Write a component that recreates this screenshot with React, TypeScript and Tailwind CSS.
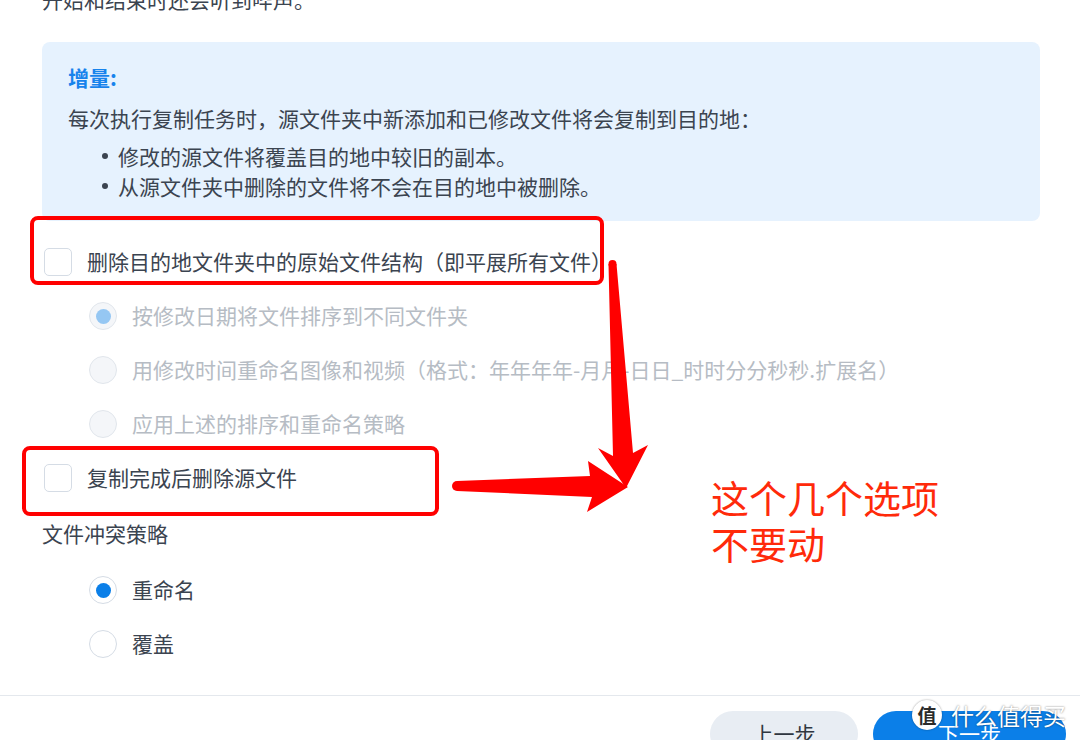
import React from "react";

const font = "font-['Noto_Sans_CJK_SC','Noto_Sans',sans-serif]";

const Checkbox = ({ label }: { label: string }) => (
  <div className="flex h-[54px] items-center gap-[15px] pl-[2px]">
    <span className="h-[28px] w-[28px] rounded-[5px] border-[1.5px] border-[#d5dce5] bg-white" />
    <span className="text-[21px] text-[#3b4450]">{label}</span>
  </div>
);

const Radio = ({
  label,
  checked,
  disabled,
}: {
  label: string;
  checked?: boolean;
  disabled?: boolean;
}) => (
  <div className="flex h-[54px] items-center gap-[15px] pl-[47px]">
    <span
      className={
        "flex h-[28px] w-[28px] items-center justify-center rounded-full border-[1.5px] " +
        (disabled ? "border-[#e1e6ec] bg-[#f4f6f9]" : "border-[#d5dce5] bg-white")
      }
    >
      {checked && (
        <span
          className={
            "h-[15px] w-[15px] rounded-full " +
            (disabled ? "bg-[#95c7f3]" : "bg-[#0b7fe8]")
          }
        />
      )}
    </span>
    <span className={"text-[21px] " + (disabled ? "text-[#b6bcc4]" : "text-[#3b4450]")}>
      {label}
    </span>
  </div>
);

export default function App() {
  return (
    <div className={"relative h-[740px] w-[1080px] overflow-hidden bg-white " + font}>
      {/* MAIN CONTENT */}
      <div className="px-[42px]">
        <p className="-mt-[16px] h-[30px] text-[21px] leading-[30px] text-[#3b4450]">
          开始和结束时还会听到哔声。
        </p>

        <div className="mt-[28px] h-[179px] w-[998px] rounded-[8px] bg-[#e6f2fe] px-[26px] pt-[20px] text-[21px] leading-[30px] text-[#3b4450]">
          <p className="font-bold text-[#1783ec]">增量:</p>
          <p className="mt-[11px]">每次执行复制任务时，源文件夹中新添加和已修改文件将会复制到目的地：</p>
          <ul className="mt-[8px] pl-[34px]">
            <li className="flex items-center gap-[10px]">
              <span className="h-[6px] w-[6px] rounded-full bg-[#3b4450]" />
              修改的源文件将覆盖目的地中较旧的副本。
            </li>
            <li className="flex items-center gap-[10px]">
              <span className="h-[6px] w-[6px] rounded-full bg-[#3b4450]" />
              从源文件夹中删除的文件将不会在目的地中被删除。
            </li>
          </ul>
        </div>

        <div className="mt-[14px]">
          <Checkbox label="删除目的地文件夹中的原始文件结构（即平展所有文件）" />
          <Radio label="按修改日期将文件排序到不同文件夹" checked disabled />
          <Radio label="用修改时间重命名图像和视频（格式：年年年年-月月-日日_时时分分秒秒.扩展名）" disabled />
          <Radio label="应用上述的排序和重命名策略" disabled />
          <Checkbox label="复制完成后删除源文件" />
          <div className="flex h-[58px] items-center text-[21px] text-[#3b4450]">文件冲突策略</div>
          <Radio label="重命名" checked />
          <Radio label="覆盖" />
        </div>
      </div>

      {/* FOOTER */}
      <div className="mt-[24px] flex justify-end gap-[15px] border-t border-[#e4e8ed] pr-[14px] pt-[15px]">
        <button className="flex h-[46px] w-[148px] items-center justify-center rounded-full bg-[#e8edf3] text-[21px] text-[#2f3640]">
          上一步
        </button>
        <button className="flex h-[46px] w-[193px] items-center justify-center rounded-full bg-[#0b7fe8] text-[21px] text-white">
          下一步
        </button>
      </div>

      {/* WATERMARK */}
      <div className="absolute left-[912px] top-[700px] flex items-center gap-[9px]">
        <span className="flex h-[30px] w-[30px] items-center justify-center rounded-full bg-white text-[19px] font-bold text-[#2b2b2b] shadow-[0_0_2px_rgba(0,0,0,0.4)]">
          值
        </span>
        <span className="text-[23px] leading-none text-white [text-shadow:0_0_2px_rgba(0,0,0,0.55)]">
          什么值得买
        </span>
      </div>

      {/* ANNOTATIONS */}
      <div className="absolute left-[30px] top-[216px] h-[69px] w-[574px] rounded-[8px] border-[4px] border-[#ff0000]" />
      <div className="absolute left-[22px] top-[446px] h-[70px] w-[417px] rounded-[8px] border-[4px] border-[#ff0000]" />
      <svg className="absolute left-0 top-0" width="1080" height="740" viewBox="0 0 1080 740">
        <circle cx="612.5" cy="264" r="4" fill="#ff0000" />
        <polygon
          points="608.5,264 616.5,264 633,453 648,445 626,488 598,448 613,456"
          fill="#ff0000"
        />
        <circle cx="457" cy="486" r="5" fill="#ff0000" />
        <polygon
          points="457,481 590,476 588,461 628,487 587,512 592,497 457,491"
          fill="#ff0000"
        />
      </svg>
      <div className="absolute left-[711px] top-[474px] text-[38px] leading-[46px] text-[#ff2a0a]">
        这个几个选项
        <br />
        不要动
      </div>
    </div>
  );
}
